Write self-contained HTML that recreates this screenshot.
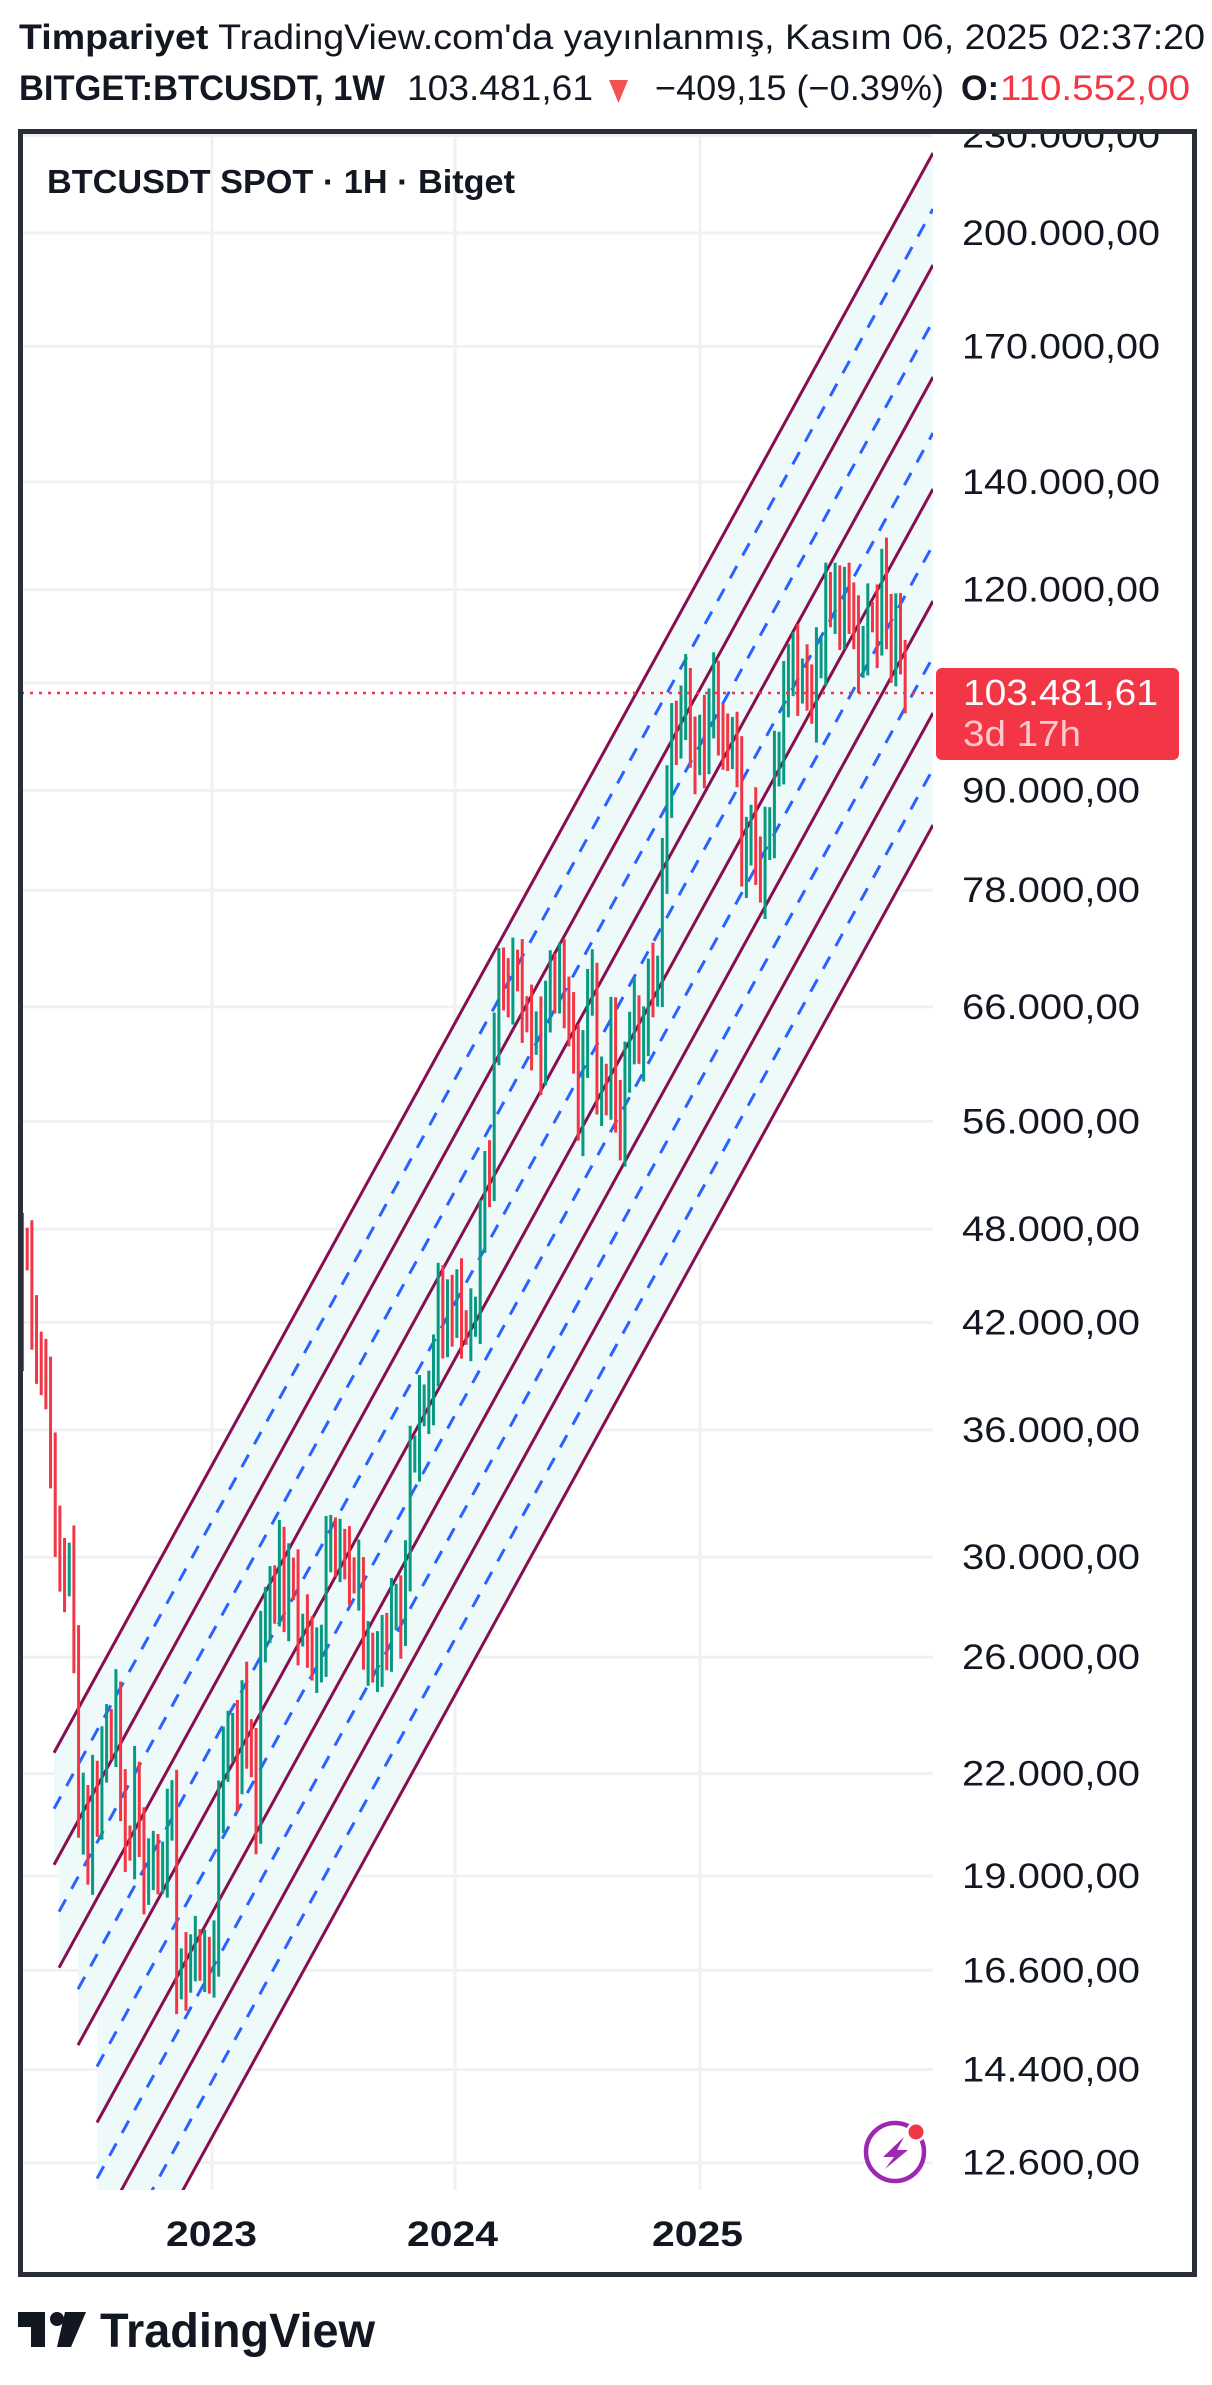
<!DOCTYPE html>
<html><head><meta charset="utf-8">
<style>
html,body{margin:0;padding:0;background:#fff;}
body{width:1212px;height:2385px;overflow:hidden;position:relative;font-family:"Liberation Sans",sans-serif;}
svg{position:absolute;left:0;top:0;}
</style></head>
<body>
<svg id="s" width="1212" height="2385" viewBox="0 0 1212 2385" xmlns="http://www.w3.org/2000/svg">
<defs>
<clipPath id="plot"><rect x="21" y="131" width="912" height="2059"/></clipPath>
<clipPath id="frame"><rect x="21" y="133" width="1170" height="2140"/></clipPath>
</defs>
<!-- header -->
<text x="19" y="49" font-size="35" fill="#131722" textLength="1186" lengthAdjust="spacingAndGlyphs"><tspan font-weight="bold">Timpariyet</tspan> TradingView.com'da yayınlanmış, Kasım 06, 2025 02:37:20</text>
<text x="19" y="100" font-size="35" font-weight="bold" fill="#131722" textLength="366" lengthAdjust="spacingAndGlyphs">BITGET:BTCUSDT, 1W</text>
<text x="407" y="100" font-size="35" fill="#131722" textLength="186" lengthAdjust="spacingAndGlyphs">103.481,61</text>
<path d="M609 80 L628 80 L618.5 103 Z" fill="#f05350"/>
<text x="655" y="100" font-size="35" fill="#131722" textLength="289" lengthAdjust="spacingAndGlyphs">−409,15 (−0.39%)</text>
<text x="961" y="100" font-size="35" font-weight="bold" fill="#131722" textLength="38" lengthAdjust="spacingAndGlyphs">O:</text>
<text x="1000" y="100" font-size="35" fill="#f23645" textLength="190" lengthAdjust="spacingAndGlyphs">110.552,00</text>

<g id="grid"></g>
<g id="chan" clip-path="url(#plot)"></g>
<g id="bars" clip-path="url(#plot)"></g>
<line x1="21" y1="693" x2="933" y2="693" stroke="#f23645" stroke-width="2.5" stroke-dasharray="3 6"/>
<g id="axis" clip-path="url(#frame)" font-size="35" fill="#131722"></g>

<text x="47" y="193" font-size="33" font-weight="bold" fill="#131722" textLength="468" lengthAdjust="spacingAndGlyphs">BTCUSDT SPOT · 1H · Bitget</text>

<rect x="936" y="668" width="243" height="92" rx="6" fill="#f23645"/>
<text x="963" y="705" font-size="36" fill="#fff" textLength="195" lengthAdjust="spacingAndGlyphs">103.481,61</text>
<text x="963" y="746" font-size="36" fill="#fcc8cd" textLength="118" lengthAdjust="spacingAndGlyphs">3d 17h</text>

<text x="166" y="2246" font-size="35" font-weight="bold" fill="#131722" textLength="91" lengthAdjust="spacingAndGlyphs">2023</text>
<text x="407" y="2246" font-size="35" font-weight="bold" fill="#131722" textLength="91" lengthAdjust="spacingAndGlyphs">2024</text>
<text x="652" y="2246" font-size="35" font-weight="bold" fill="#131722" textLength="91" lengthAdjust="spacingAndGlyphs">2025</text>

<!-- lightning icon -->
<circle cx="895" cy="2152" r="29" fill="#fff" stroke="#9c27b0" stroke-width="4.5"/>
<path d="M904 2137 L883 2157 L894 2157 L885 2169 L908 2150 L897 2150 Z" fill="#9c27b0"/>
<circle cx="916" cy="2132" r="10" fill="#fff"/>
<circle cx="916" cy="2132" r="7.5" fill="#f23645"/>

<rect x="20.5" y="131.5" width="1174" height="2143" fill="none" stroke="#2a2e39" stroke-width="5"/>

<!-- logo -->
<path d="M18 2312 H45 V2347 H31 V2327 H18 Z" fill="#131722"/>
<circle cx="57" cy="2319" r="7" fill="#131722"/>
<path d="M65 2312 H86 L71 2347 H57 Z" fill="#131722"/>
<text x="100" y="2347" font-size="48" font-weight="bold" fill="#131722" textLength="275" lengthAdjust="spacingAndGlyphs">TradingView</text>
</svg>
<script>
(function(){
var NS="http://www.w3.org/2000/svg";
function el(p,t,a){var e=document.createElementNS(NS,t);for(var k in a)e.setAttribute(k,a[k]);p.appendChild(e);return e;}
function Y(p){return 233-698*Math.log(p/200000);}
var grid=document.getElementById('grid'),axis=document.getElementById('axis');
var prices=[230000,200000,170000,140000,120000,105000,90000,78000,66000,56000,48000,42000,36000,30000,26000,22000,19000,16600,14400,12600];
prices.forEach(function(p){var y=Y(p);
 el(grid,'line',{x1:21,x2:933,y1:y,y2:y,stroke:'#f0f1f3','stroke-width':3});
 if(p!==105000){var s=Math.round(p).toString().replace(/\B(?=(\d{3})+(?!\d))/g,'.')+',00';
 var t=el(axis,'text',{x:962,y:y+12,textLength:s.length==10?198:178,lengthAdjust:'spacingAndGlyphs'});t.textContent=s;}
});
[212,455,700].forEach(function(x){el(grid,'line',{x1:x,x2:x,y1:131,y2:2190,stroke:'#f0f1f3','stroke-width':3});});
var ch=document.getElementById('chan');
var sl=1.82;
function LY(k,x){return 153+112*k+sl*(933-x);}
var bandStart=[54,59,78,97,97,97];
for(var k=0;k<6;k++){var xs=bandStart[k];
 el(ch,'polygon',{points:xs+','+LY(k,xs)+' 933,'+LY(k,933)+' 933,'+LY(k+1,933)+' '+xs+','+LY(k+1,xs),fill:'#eefafa'});}
for(var k=0;k<6;k++){var xs=bandStart[k];
 el(ch,'line',{x1:xs,y1:LY(k+0.5,xs),x2:933,y2:LY(k+0.5,933),stroke:'#2962ff','stroke-width':3,'stroke-dasharray':'14 12'});}
var ls=[54,54,59,78,97,97,97];
for(var k=0;k<7;k++){var xs=ls[k];
 el(ch,'line',{x1:xs,y1:LY(k,xs),x2:933,y2:LY(k,933),stroke:'#880e4f','stroke-width':3});}
var c=[41000,46800,46400,42200,39700,39400,38500,34300,31300,29400,29000,29900,26600,20500,21000,19300,21600,20800,22600,23300,23200,24400,21100,20000,19800,21800,20000,18800,19400,19400,19200,19200,20600,21100,16300,16700,16400,17100,17100,16800,16800,16600,
17100,20900,22700,23000,23300,21800,24600,23200,22400,20500,26900,27500,28500,28300,30300,27800,29200,28900,26900,27100,26800,25800,25900,26300,30500,30600,30200,30300,29900,29300,29100,29300,26100,26100,25800,25800,26600,26500,27900,27900,27100,29900,34500,35000,37100,37400,37400,39900,43800,41400,43000,42300,
43900,41700,41600,42000,42600,47700,52100,51700,63100,68900,68300,67200,69600,69300,65600,64900,63100,63900,60800,66300,68500,67800,69600,66700,64300,62700,55800,60800,68200,68300,58100,58700,58400,64200,57300,54800,60000,63600,65600,62100,62900,69000,68000,68800,80400,89800,98000,97200,101100,104400,95300,93700,
98300,94500,101300,104700,97700,96500,96100,96300,94300,80700,82600,86100,82300,78300,83800,85200,93700,94300,104000,106400,109000,104600,105700,105600,100900,108300,109200,119000,117300,119400,114200,119300,117400,113500,108200,111100,115300,115200,112200,123500,115000,108600,114500,110500,103480];
var b=document.getElementById('bars');
var x0=214-42*4.67;
for(var i=1;i<c.length;i++){
 var o=c[i-1],cl=c[i];var v=0.02+0.03*Math.abs(Math.sin(i*1.7));
 var hi=Math.max(o,cl)*(1+v),lo=Math.min(o,cl)*(1-v*0.9);
 var x=x0+i*4.67;
 if(i==c.length-1){hi=110552*1.01;lo=100500;}
 el(b,'rect',{x:x-1.5,y:Y(hi),width:3,height:Y(lo)-Y(hi),fill:cl>=o?'#089981':'#f23645'});
}
})();
</script>
</body></html>
